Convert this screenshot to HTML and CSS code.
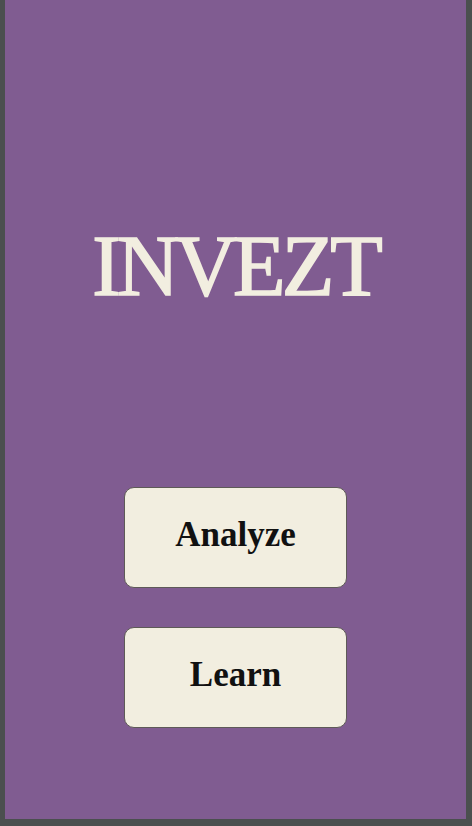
FILE: index.html
```html
<!DOCTYPE html>
<html>
<head>
<meta charset="utf-8">
<link rel="stylesheet" href="styles.css">
</head>
<body>
<div class="frame">
  <main class="screen">
    <h1 class="title">INVEZT</h1>
    <div class="actions">
      <button class="btn">Analyze</button>
      <button class="btn">Learn</button>
    </div>
  </main>
</div>
</body>
</html>
```
FILE: styles.css
```css
html, body {
  margin: 0;
  padding: 0;
  background: #4b4f4f;
}
.frame {
  width: 472px;
  height: 826px;
  box-sizing: border-box;
  padding: 0 6px 7px 5px;
  background: #4b4f4f;
}
.screen {
  height: 100%;
  background: #805c91;
  display: flex;
  flex-direction: column;
  align-items: center;
}
.title {
  margin: 216px 0 0 0;
  font-family: "Liberation Serif", serif;
  font-weight: normal;
  font-size: 86px;
  line-height: 100px;
  letter-spacing: -4px;
  color: #f2eee0;
  -webkit-text-stroke: 1.6px #f2eee0;
}
.actions {
  margin-top: 171px;
  display: flex;
  flex-direction: column;
  gap: 39px;
}
.btn {
  width: 223px;
  height: 101px;
  box-sizing: border-box;
  background: #f2eee0;
  border: 1px solid #5e5a57;
  border-radius: 10px;
  font-family: "Liberation Serif", serif;
  font-weight: bold;
  font-size: 35px;
  color: #111;
  padding: 0 0 6px 0;
}
```
